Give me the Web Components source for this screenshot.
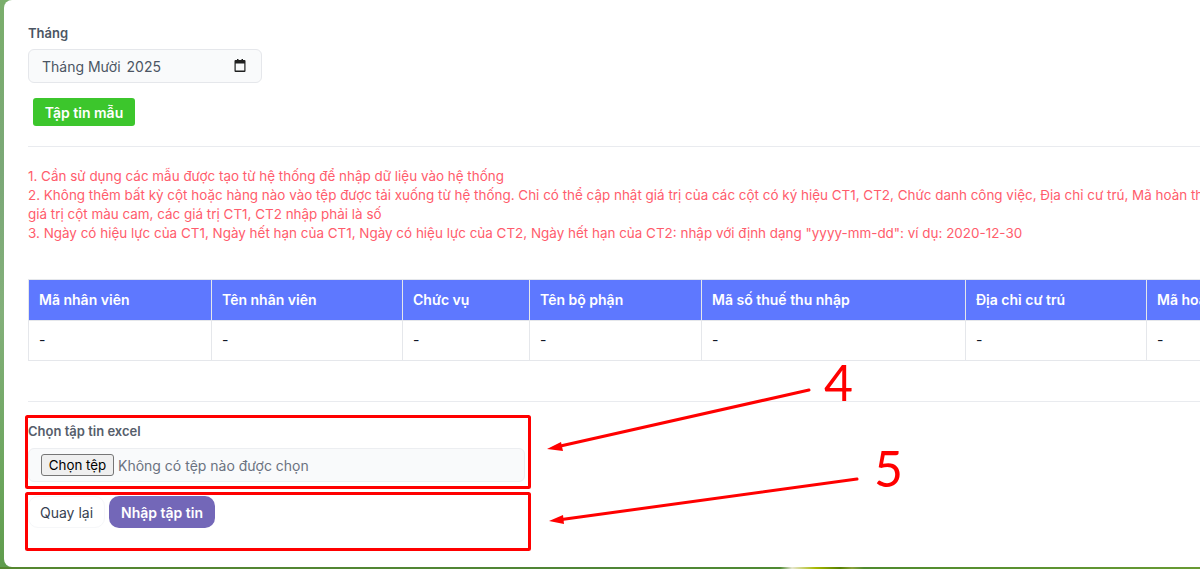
<!DOCTYPE html>
<html lang="vi">
<head>
<meta charset="utf-8">
<title>Nhập tập tin</title>
<style>
  html, body { margin: 0; height: 100%; overflow: hidden; }
  body { font-family: Inter, "Liberation Sans", sans-serif; font-size: 14px; }
</style>
</head>
<body>
<import-page>
  <month-field label="Tháng" value="Tháng Mười" year="2025"></month-field>
  <sample-button>Tập tin mẫu</sample-button>
  <page-rule></page-rule>
  <import-notes>
    <div>1. Cần sử dụng các mẫu được tạo từ hệ thống để nhập dữ liệu vào hệ thống</div>
    <div>2. Không thêm bất kỳ cột hoặc hàng nào vào tệp được tải xuống từ hệ thống. Chỉ có thể cập nhật giá trị của các cột có ký hiệu CT1, CT2, Chức danh công việc, Địa chỉ cư trú, Mã hoàn thuế thu nhập cá nhân</div>
    <div>giá trị cột màu cam, các giá trị CT1, CT2 nhập phải là số</div>
    <div>3. Ngày có hiệu lực của CT1, Ngày hết hạn của CT1, Ngày có hiệu lực của CT2, Ngày hết hạn của CT2: nhập với định dạng "yyyy-mm-dd": ví dụ: 2020-12-30</div>
  </import-notes>
  <preview-table></preview-table>
  <page-rule style="margin-top: 40px"></page-rule>
  <file-field label="Chọn tập tin excel"></file-field>
  <form-actions></form-actions>
  <note-marks></note-marks>
</import-page>

<script>
class ImportPage extends HTMLElement {
    constructor() {
        super();
        this.attachShadow({ mode: "open" });
        this.shadowRoot.innerHTML = `
        <style>
          :host {
            display: block; height: 569px; overflow: hidden; box-sizing: border-box; padding: 0 0 2px 4px;
            background:
              linear-gradient(90deg, #55872f 0, #4f8536 50%, #4f8a33 65%, #e6e6cf 66%, #a6b800 68%, #557f00 70%, #8aa23c 71%, #4f8a2e 72%, #689a33 100%) bottom / 100% 2px no-repeat,
              linear-gradient(180deg, #7aae6b 0, #7ba877 30%, #83b07a 55%, #6ba55c 85%, #5f9c4c 100%);
          }
          .card {
            position: relative; box-sizing: border-box; width: 1500px; height: 567px; padding: 24px 24px 0;
            background: #fff; border-radius: 8px; color: #4b5563;
          }
        </style>
        <div class="card"><slot></slot></div>`;
    }
}

class MonthField extends HTMLElement {
    constructor() {
        super();
        this.attachShadow({ mode: "open" });
    }

    connectedCallback() {
        this.shadowRoot.innerHTML = `
        <style>
          :host { display: block; }
          label { display: block; font-size: 13px; font-weight: 600; line-height: 18px; margin-bottom: 7px; color: #4b5563; }
          .input {
            display: flex; align-items: center; justify-content: space-between; box-sizing: border-box;
            width: 234px; height: 34px; padding: 0 14px 0 13px;
            background: #f9fafb; border: 1px solid #e5e7eb; border-radius: 6px;
            font-size: 14px; color: #4b5563;
          }
          .year { margin-left: 6px; }
          svg { width: 16px; height: 16px; display: block; margin-right: -1px; }
        </style>
        <label>${this.getAttribute("label")}</label>
        <div class="input">
          <span>${this.getAttribute("value")}<span class="year">${this.getAttribute("year")}</span></span>
          <svg viewBox="0 0 16 16"><path d="M3.5 2.5h1.5v-1h1.5v1h3v-1h1.5v1h1.5a1 1 0 0 1 1 1v10a1 1 0 0 1-1 1h-9a1 1 0 0 1-1-1v-10a1 1 0 0 1 1-1zM3.7 6v7h8.6V6z" fill="#1f1f1f" fill-rule="evenodd" transform="translate(0 -.5)"/></svg>
        </div>`;
    }
}

class SampleButton extends HTMLElement {
    constructor() {
        super();
        this.attachShadow({ mode: "open" });
        this.shadowRoot.innerHTML = `
        <style>
          :host { display: block; padding: 15px 0 0 5px; }
          button {
            display: block; height: 28px; width: 102px; padding: 0; border: 0; border-radius: 3px;
            background: #3cc62c; color: #fff; font: 600 14px Inter, "Liberation Sans", sans-serif;
          }
        </style>
        <button><slot></slot></button>`;
    }
}

class PageRule extends HTMLElement {
    constructor() {
        super();
        this.attachShadow({ mode: "open" });
        this.shadowRoot.innerHTML = `
        <style>
          :host { display: block; height: 1px; margin-top: 20px; background: #e9ebef; }
        </style>`;
    }
}

class ImportNotes extends HTMLElement {
    constructor() {
        super();
        this.attachShadow({ mode: "open" });
        this.shadowRoot.innerHTML = `
        <style>
          :host { display: block; margin-top: 20px; font-size: 13.45px; line-height: 19px; color: #ff5c6c; white-space: nowrap; }
        </style>
        <slot></slot>`;
    }
}

class PreviewTable extends HTMLElement {
    constructor() {
        super();
        this.attachShadow({ mode: "open" });
    }

    connectedCallback() {
        const cols = [
            ["Mã nhân viên", 183],
            ["Tên nhân viên", 191],
            ["Chức vụ", 127],
            ["Tên bộ phận", 172],
            ["Mã số thuế thu nhập", 264],
            ["Địa chỉ cư trú", 181],
            ["Mã hoàn thuế thu nhập", 230],
        ];
        const total = cols.reduce((sum, c) => sum + c[1], 0);
        this.shadowRoot.innerHTML = `
        <style>
          :host { display: block; margin-top: 36px; }
          table { border-collapse: collapse; table-layout: fixed; width: ${total}px; }
          th, td { box-sizing: border-box; border: 1px solid #e5e7eb; padding: 0 10px 2px; text-align: left; white-space: nowrap; overflow: hidden; }
          th { height: 41px; background: #5e78ff; color: #fff; font-size: 14px; font-weight: 600; border-color: #e5e7eb; }
          td { height: 40px; font-size: 14px; color: #111827; }
        </style>
        <table>
          <colgroup>${cols.map(c => `<col style="width:${c[1]}px">`).join("")}</colgroup>
          <tr>${cols.map(c => `<th>${c[0]}</th>`).join("")}</tr>
          <tr>${cols.map(() => `<td>-</td>`).join("")}</tr>
        </table>`;
    }
}

class FileField extends HTMLElement {
    constructor() {
        super();
        this.attachShadow({ mode: "open" });
    }

    connectedCallback() {
        this.shadowRoot.innerHTML = `
        <style>
          :host { display: block; margin-top: 20px; }
          label { display: block; font-size: 13px; font-weight: 600; line-height: 18px; margin-bottom: 8px; color: #565e6b; }
          .input {
            display: flex; align-items: center; gap: 4px; box-sizing: border-box;
            width: 497px; height: 34px; padding: 0 12px;
            background: #f9fafb; border: 1px solid #eceef1; border-radius: 6px;
            font-size: 14px; color: #6b7280;
          }
          button {
            height: 22px; width: 73px; padding: 0; box-sizing: border-box;
            background: #efefef; border: 1px solid #767676; border-radius: 3px;
            color: #000; font: 13.33px Inter, "Liberation Sans", sans-serif;
          }
        </style>
        <label>${this.getAttribute("label")}</label>
        <div class="input"><button>Chọn tệp</button><span>Không có tệp nào được chọn</span></div>`;
    }
}

class FormActions extends HTMLElement {
    constructor() {
        super();
        this.attachShadow({ mode: "open" });
        this.shadowRoot.innerHTML = `
        <style>
          :host { display: flex; gap: 4px; margin-top: 14px; }
          button { height: 32px; padding: 0; font: 14px Inter, "Liberation Sans", sans-serif; border-radius: 10px; }
          .back { width: 77px; background: #fff; border: 1px solid #f6f7f9; color: #374151; }
          .submit { width: 106px; background: #7367b8; border: 0; color: #fff; font-weight: 600; }
        </style>
        <button class="back">Quay lại</button>
        <button class="submit">Nhập tập tin</button>`;
    }
}

// red review marks drawn over the screenshot, free position is the content here
class NoteMarks extends HTMLElement {
    constructor() {
        super();
        this.attachShadow({ mode: "open" });
        this.shadowRoot.innerHTML = `
        <style>
          :host { position: absolute; left: -4px; top: 0; width: 1200px; height: 569px; pointer-events: none; }
          svg { position: absolute; inset: 0; width: 1200px; height: 569px; }
          span { position: absolute; font: 50px/50px Lato, "Open Sans", sans-serif; color: #ff0000; }
        </style>
        <svg viewBox="0 0 1200 569" fill="none" stroke="#ff0000">
          <rect x="26.5" y="416.5" width="503" height="71" stroke-width="3" rx="1"/>
          <rect x="26.5" y="493.5" width="503" height="56" stroke-width="3" rx="1"/>
          <path d="M809 390 L556 447" stroke-width="3" stroke-linecap="round"/>
          <path d="M547 449 L561 442 L563 451 Z" fill="#ff0000" stroke="none"/>
          <path d="M857 479 L558 520" stroke-width="3" stroke-linecap="round"/>
          <path d="M549 521 L563 515 L564 524 Z" fill="#ff0000" stroke="none"/>
        </svg>
        <span style="left:824px;top:357px">4</span>
        <span style="left:874px;top:443px">5</span>`;
    }
}

customElements.define("import-page", ImportPage);
customElements.define("month-field", MonthField);
customElements.define("sample-button", SampleButton);
customElements.define("page-rule", PageRule);
customElements.define("import-notes", ImportNotes);
customElements.define("preview-table", PreviewTable);
customElements.define("file-field", FileField);
customElements.define("form-actions", FormActions);
customElements.define("note-marks", NoteMarks);
</script>
</body>
</html>
